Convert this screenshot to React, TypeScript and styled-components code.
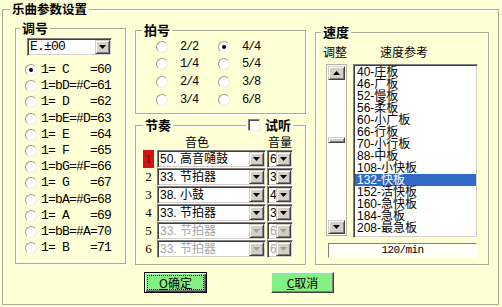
import React from "react";
import styled, { createGlobalStyle, css } from "styled-components";

const YELLOW = "#FFFFD6";
const CJK = `"Noto Sans CJK SC", sans-serif`;
const MONO = `"Liberation Mono", "Noto Sans CJK SC", monospace`;
const SANS = `"Liberation Sans", "Noto Sans CJK SC", sans-serif`;

const GlobalStyle = createGlobalStyle`
    * { box-sizing: border-box; }
    html, body { margin: 0; background: ${YELLOW}; }
    body { font-family: ${CJK}; font-size: 12px; color: #000; }
`;

const etched = css`
    border: 1px solid #adab93;
    box-shadow: inset 1px 1px 0 #fff, 1px 1px 0 #fff;
`;

const sunken = css`
    border: 1px solid;
    border-color: #808080 #fff #fff #808080;
    box-shadow: inset 1px 1px 0 #404040, inset -1px -1px 0 #d4d0c8;
`;

const raised = css`
    background: #d4d0c8;
    border: 1px solid;
    border-color: #d4d0c8 #404040 #404040 #d4d0c8;
    box-shadow: inset 1px 1px 0 #fff, inset -1px -1px 0 #808080;
`;

const Frame = styled.div`
    ${etched}
    margin: 9px 0 0 2px;
    width: 497px;
    height: 296px;
`;

const Caption = styled.div<{ $indent: number; $right?: number }>`
    display: flex;
    align-items: center;
    justify-content: space-between;
    height: 16px;
    margin: -9px ${(p) => p.$right ?? 0}px 0 ${(p) => p.$indent}px;
`;

const Title = styled.span<{ $size?: number }>`
    padding: 0 2px;
    background: ${YELLOW};
    font-family: ${CJK};
    font-weight: 700;
    font-size: ${(p) => p.$size ?? 13}px;
    line-height: 16px;
`;

const Columns = styled.div`
    display: grid;
    grid-template-columns: 111px 171px 174px;
    column-gap: 9px;
    align-items: start;
    padding-left: 12px;
`;

const Stack = styled.div`
    display: flex;
    flex-direction: column;
`;

const Group = styled.div<{ $top: number; $h: number }>`
    ${etched}
    margin-top: ${(p) => p.$top}px;
    height: ${(p) => p.$h}px;
`;

/* combo boxes */
const ComboBox = styled.div<{ $w: number; $left?: number; $top?: number }>`
    ${sunken}
    display: flex;
    width: ${(p) => p.$w}px;
    height: 18px;
    margin: ${(p) => p.$top ?? 0}px 0 0 ${(p) => p.$left ?? 0}px;
    padding: 1px;
    background: #fff;
`;

const ComboValue = styled.span<{ $off?: boolean; $mono?: boolean }>`
    flex: 1;
    min-width: 0;
    padding-left: 1px;
    overflow: hidden;
    white-space: pre;
    font-family: ${(p) => (p.$mono ? MONO : SANS)};
    font-size: ${(p) => (p.$mono ? 13 : 12)}px;
    letter-spacing: ${(p) => (p.$mono ? "-0.8px" : "0")};
    line-height: 14px;
    color: ${(p) => (p.$off ? "#a6a6a6" : "#000")};
`;

const DropButton = styled.span`
    ${raised}
    flex: none;
    width: 15px;
    display: flex;
    align-items: center;
    justify-content: center;
`;

function Arrow({ up, off }: { up?: boolean; off?: boolean }) {
    return (
        <svg width="7" height="4" viewBox="0 0 7 4">
            <path d={up ? "M3.5 0L7 4H0z" : "M0 0h7L3.5 4z"} fill={off ? "#a0a0a0" : "#000"} />
        </svg>
    );
}

function Combo({ w, value, off, mono, left, top }: { w: number; value: string; off?: boolean; mono?: boolean; left?: number; top?: number }) {
    return (
        <ComboBox $w={w} $left={left} $top={top}>
            <ComboValue $off={off} $mono={mono}>{value}</ComboValue>
            <DropButton>
                <Arrow off={off} />
            </DropButton>
        </ComboBox>
    );
}

/* radio buttons */
const RadioMark = styled.span<{ $on?: boolean }>`
    flex: none;
    display: flex;
    align-items: center;
    justify-content: center;
    width: 12px;
    height: 12px;
    border-radius: 50%;
    background: #fff;
    border: 1px solid;
    border-color: #9c9b90 #eeeee4 #eeeee4 #9c9b90;

    &::after {
        content: "";
        width: 4px;
        height: 4px;
        border-radius: 50%;
        background: ${(p) => (p.$on ? "#000" : "transparent")};
    }
`;

const KeyList = styled.div`
    margin-top: 6px;
    padding-left: 9px;
`;

const KeyRow = styled.div`
    display: flex;
    align-items: center;
    gap: 4px;
    height: 16.2px;
`;

const KeyText = styled.span`
    font-family: ${MONO};
    font-size: 13px;
    letter-spacing: -0.8px;
    white-space: pre;
    line-height: 16px;
`;

const MeterGrid = styled.div`
    display: grid;
    grid-template-columns: 62px 62px;
    grid-auto-rows: 17.67px;
    padding-left: 20px;
`;

const MeterItem = styled.div`
    display: flex;
    align-items: center;
    gap: 12px;
`;

const MeterText = styled.span`
    font-family: ${MONO};
    font-size: 12px;
    letter-spacing: -1.2px;
    line-height: 16px;
`;

/* rhythm tracks */
const ListenToggle = styled.div`
    display: flex;
    align-items: center;
    gap: 5px;
    padding: 0 2px;
    background: ${YELLOW};
    font-weight: 700;
    font-size: 13px;
    line-height: 16px;
`;

const CheckBox = styled.span`
    width: 12px;
    height: 12px;
    background: #fff;
    border: 1px solid;
    border-color: #808080 #eeeee4 #eeeee4 #808080;
    box-shadow: inset 1px 1px 0 #505050;
`;

const TrackGrid = styled.div`
    display: grid;
    grid-template-columns: 14px 110px 26px;
    grid-template-rows: 17px repeat(6, 18px);
    padding-left: 7px;
`;

const HeadCell = styled.div<{ $pad: number }>`
    padding-left: ${(p) => p.$pad}px;
    font-size: 12px;
    line-height: 17px;
`;

const NumCell = styled.div<{ $active?: boolean }>`
    width: 11px;
    height: 18px;
    display: flex;
    align-items: center;
    justify-content: center;
    font-family: "Liberation Serif", serif;
    font-size: 13px;
    background: ${(p) => (p.$active ? "#d41414" : "transparent")};
    color: ${(p) => (p.$active ? "#7a0000" : "#000")};
`;

/* speed */
const SpeedLabels = styled.div`
    display: flex;
    gap: 33px;
    height: 16px;
    margin-top: 4px;
    padding-left: 7px;
    font-size: 12px;
    line-height: 16px;
`;

const SpeedBody = styled.div`
    display: flex;
    gap: 6px;
    height: 174px;
    margin-top: 4px;
    padding-left: 10px;
`;

const ScrollBar = styled.div`
    display: flex;
    flex-direction: column;
    width: 21px;
    height: 172px;
    padding: 1px;
    border: 1px solid #b4b2a0;
    background: #fff;
`;

const ScrollButton = styled.span`
    ${raised}
    flex: none;
    height: 14px;
    display: flex;
    align-items: center;
    justify-content: center;
`;

const ScrollTrack = styled.div`
    flex: 1;
    display: flex;
    flex-direction: column;
`;

const ScrollThumb = styled.span`
    ${raised}
    flex: none;
    height: 6px;
`;

const ListBox = styled.div`
    ${sunken}
    width: 125px;
    height: 174px;
    padding: 1px;
    background: #fff;
    overflow: hidden;
`;

const ListItem = styled.div<{ $selected?: boolean }>`
    height: 12px;
    padding-left: 2px;
    font-family: ${SANS};
    font-size: 12px;
    line-height: 12px;
    white-space: nowrap;
    background: ${(p) => (p.$selected ? "#316ac5" : "transparent")};
    color: ${(p) => (p.$selected ? "#fff" : "#000")};
`;

const TempoDisplay = styled.div`
    width: 149px;
    height: 15px;
    margin: 5px 0 0 12px;
    border: 1px solid;
    border-color: #808080 #fff #fff #808080;
    background: #fffff6;
    text-align: center;
    font-family: ${MONO};
    font-size: 11px;
    letter-spacing: -0.6px;
    line-height: 13px;
`;

/* buttons */
const ButtonRow = styled.div`
    display: flex;
    gap: 64px;
    margin-top: 7px;
    padding-left: 141px;
`;

const PushButton = styled.button<{ $default?: boolean }>`
    width: 63px;
    height: 21px;
    padding: 0;
    display: flex;
    align-items: center;
    justify-content: center;
    background: #82f082;
    font-family: ${CJK};
    font-size: 12px;
    line-height: 13px;
    color: #000;
    border: 1px solid;
    ${(p) =>
        p.$default
            ? css`
                  border-color: #000;
                  box-shadow: inset 1px 1px 0 #fff, inset -1px -1px 0 #404040, inset -2px -2px 0 #808080;
              `
            : css`
                  border-color: #fff #404040 #404040 #fff;
                  box-shadow: inset -1px -1px 0 #808080;
              `}
`;

const FocusRing = styled.span`
    display: flex;
    align-items: center;
    justify-content: center;
    width: 57px;
    height: 15px;
    border: 1px dotted #000;
`;

const keys = [
    "1= C   =60",
    "1=bD=#C=61",
    "1= D   =62",
    "1=bE=#D=63",
    "1= E   =64",
    "1= F   =65",
    "1=bG=#F=66",
    "1= G   =67",
    "1=bA=#G=68",
    "1= A   =69",
    "1=bB=#A=70",
    "1= B   =71",
];

const meters = ["2/2", "4/4", "1/4", "5/4", "2/4", "3/8", "3/4", "6/8"];

const tracks = [
    { sound: "50. 高音嗵鼓", vol: "6", on: true },
    { sound: "33. 节拍器", vol: "3", on: true },
    { sound: "38. 小鼓", vol: "4", on: true },
    { sound: "33. 节拍器", vol: "3", on: true },
    { sound: "33. 节拍器", vol: "6", on: false },
    { sound: "33. 节拍器", vol: "6", on: false },
];

const speeds = ["40-庄板", "46-广板", "52-慢板", "56-柔板", "60-小广板", "66-行板", "70-小行板", "88-中板", "108-小快板", "132-快板", "152-活快板", "160-急快板", "184-急板", "208-最急板"];

const tempo = 120;
const thumbTop = ((tempo - 30) / 210) * 134;

function App() {
    return (
        <>
            <GlobalStyle />
            <Frame>
                <Caption $indent={7}>
                    <Title $size={12.5}>乐曲参数设置</Title>
                </Caption>
                <Columns>
                    <Group $top={11} $h={236}>
                        <Caption $indent={4}>
                            <Title>调号</Title>
                        </Caption>
                        <Combo w={85} value="E.±00" mono left={11} top={2} />
                        <KeyList>
                            {keys.map((k, i) => (
                                <KeyRow key={k}>
                                    <RadioMark $on={i === 0} />
                                    <KeyText>{k}</KeyText>
                                </KeyRow>
                            ))}
                        </KeyList>
                    </Group>

                    <Stack>
                        <Group $top={13} $h={84}>
                            <Caption $indent={6}>
                                <Title>拍号</Title>
                            </Caption>
                            <MeterGrid>
                                {meters.map((m) => (
                                    <MeterItem key={m}>
                                        <RadioMark $on={m === "4/4"} />
                                        <MeterText>{m}</MeterText>
                                    </MeterItem>
                                ))}
                            </MeterGrid>
                        </Group>
                        <Group $top={11} $h={140}>
                            <Caption $indent={7} $right={12}>
                                <Title>节奏</Title>
                                <ListenToggle>
                                    <CheckBox />
                                    试听
                                </ListenToggle>
                            </Caption>
                            <TrackGrid>
                                <div />
                                <HeadCell $pad={28}>音色</HeadCell>
                                <HeadCell $pad={1}>音量</HeadCell>
                                {tracks.map((t, i) => (
                                    <React.Fragment key={i}>
                                        <NumCell $active={i === 0}>{i + 1}</NumCell>
                                        <Combo w={109} value={t.sound} off={!t.on} />
                                        <Combo w={26} value={t.vol} off={!t.on} />
                                    </React.Fragment>
                                ))}
                            </TrackGrid>
                        </Group>
                    </Stack>

                    <Group $top={15} $h={233}>
                        <Caption $indent={5}>
                            <Title>速度</Title>
                        </Caption>
                        <SpeedLabels>
                            <span>调整</span>
                            <span>速度参考</span>
                        </SpeedLabels>
                        <SpeedBody>
                            <ScrollBar>
                                <ScrollButton>
                                    <Arrow up />
                                </ScrollButton>
                                <ScrollTrack>
                                    <span style={{ height: thumbTop }} />
                                    <ScrollThumb />
                                </ScrollTrack>
                                <ScrollButton>
                                    <Arrow />
                                </ScrollButton>
                            </ScrollBar>
                            <ListBox>
                                {speeds.map((s) => (
                                    <ListItem key={s} $selected={s === "132-快板"}>
                                        {s}
                                    </ListItem>
                                ))}
                            </ListBox>
                        </SpeedBody>
                        <TempoDisplay>{tempo}/min</TempoDisplay>
                    </Group>
                </Columns>
                <ButtonRow>
                    <PushButton $default>
                        <FocusRing>
                            <u>O</u>确定
                        </FocusRing>
                    </PushButton>
                    <PushButton>
                        <u>C</u>取消
                    </PushButton>
                </ButtonRow>
            </Frame>
        </>
    );
}

export default App;
